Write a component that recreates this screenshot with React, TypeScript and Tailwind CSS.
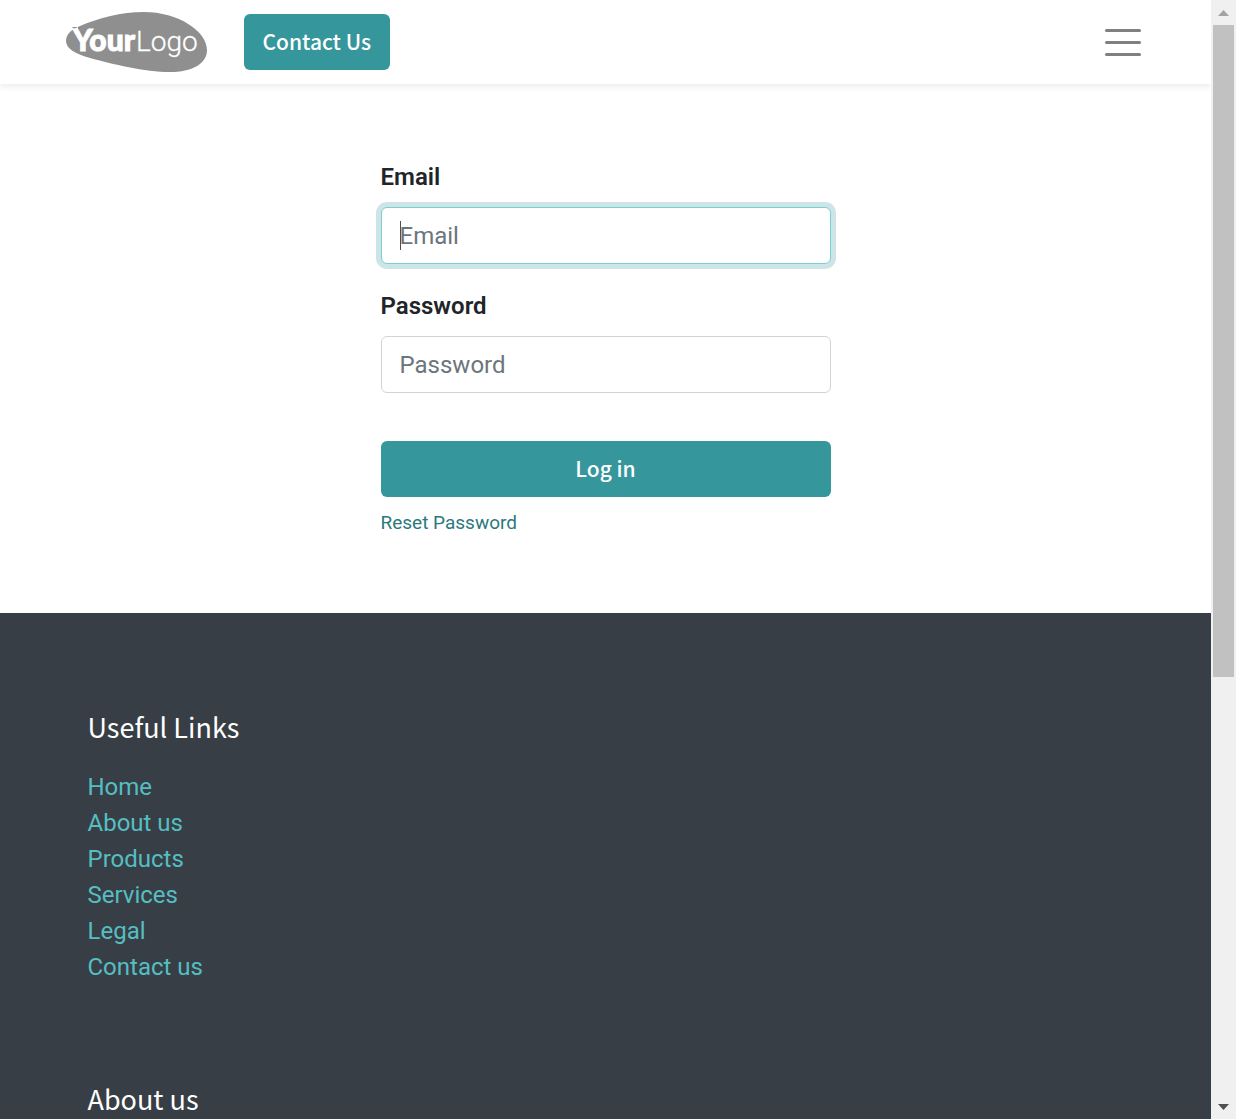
import React from "react";

const links = ["Home", "About us", "Products", "Services", "Legal", "Contact us"];

function Logo() {
  return (
    <svg width="142" height="62" viewBox="0 0 142 62" role="img" aria-label="Your Logo">
      <path
        d="M0 30C0 23 6 18 14 15C33 7 55 1 78 1C112 1 141 20 141 39C141 53 126 61 104 61C79 61 46 53 24 47C10 43 0 38 0 30Z"
        fill="#8f8f8f"
      />
      <path d="M6 16H13L9 19Z" fill="#8f8f8f" />
      <path d="M8 18L12 16L12 21Z" fill="#ffffff" />
      <text x="7" y="40" fill="#ffffff" stroke="#ffffff" strokeWidth="1" fontSize="30" className="font-['Lato'] font-black">
        Your
      </text>
      <text x="70" y="40" fill="#ffffff" stroke="#ffffff" strokeWidth="0.3" fontSize="28" className="font-['Roboto'] font-light">
        Logo
      </text>
    </svg>
  );
}

function Header() {
  return (
    <header className="relative z-10 h-[84px] bg-white shadow-[0_3px_6px_rgba(0,0,0,0.075)]">
      <nav className="mx-auto flex h-full max-w-[1080px] items-center">
        <a href="#home" className="mr-9">
          <Logo />
        </a>
        <a
          href="#contact"
          className="flex h-14 items-center rounded-md bg-[#35979c] px-[19px] pb-0.5 font-['Noto_Sans_CJK_SC',sans-serif] text-[21px] leading-9 font-medium text-white"
        >
          Contact Us
        </a>
        <button type="button" aria-label="Menu" className="mr-[5px] ml-auto flex w-9 flex-col gap-[9px]">
          <span className="h-[3px] w-full rounded-full bg-[#808080]" />
          <span className="h-[3px] w-full rounded-full bg-[#808080]" />
          <span className="h-[3px] w-full rounded-full bg-[#808080]" />
        </button>
      </nav>
    </header>
  );
}

function LoginForm() {
  return (
    <form className="mx-auto w-full max-w-[450px] pt-[75px] pb-[76px]">
      <label htmlFor="email" className="mb-3 block leading-9 font-semibold">
        Email
      </label>
      <div className="relative mb-6">
        <input
          id="email"
          type="email"
          placeholder="Email"
          className="block h-[57px] w-full rounded-md border border-[#7bcfd2] bg-white px-[18px] caret-transparent shadow-[0_0_0_5px_#cde5e6] outline-none placeholder:text-[#6c757d]"
        />
        <span className="absolute top-[14px] left-[19px] h-[29px] w-px bg-[#495057]" />
      </div>
      <label htmlFor="password" className="mb-3 block leading-9 font-semibold">
        Password
      </label>
      <input
        id="password"
        type="password"
        placeholder="Password"
        className="block h-[57px] w-full rounded-md border border-[#ced4da] bg-white px-[18px] outline-none placeholder:text-[#6c757d]"
      />
      <button
        type="submit"
        className="mt-12 block h-14 w-full rounded-md bg-[#35979c] font-['Noto_Sans_CJK_SC',sans-serif] text-[21px] font-medium text-white"
      >
        Log in
      </button>
      <a href="#reset" className="mt-3 block text-[19px] leading-7 text-[#2b797d]">
        Reset Password
      </a>
    </form>
  );
}

function Footer() {
  return (
    <footer className="flex-1 bg-[#383e45] pt-24">
      <div className="mx-auto max-w-[1080px] px-[22px]">
        <h5 className="mb-6 font-['Noto_Sans_CJK_SC',sans-serif] text-[27px] leading-9 text-white">Useful Links</h5>
        <ul className="text-[#55bec2]">
          {links.map((l) => (
            <li key={l} className="leading-9">
              <a href="#page">{l}</a>
            </li>
          ))}
        </ul>
        <h5 className="mt-24 font-['Noto_Sans_CJK_SC',sans-serif] text-[27px] leading-9 text-white">About us</h5>
      </div>
    </footer>
  );
}

function ScrollBar() {
  return (
    <div aria-hidden="true" className="flex w-[25px] shrink-0 flex-col items-center bg-[#f0f0f0]">
      <div className="flex h-[25px] shrink-0 items-center">
        <svg width="11" height="6" viewBox="0 0 11 6" className="mt-px">
          <path d="M0 6L5.5 0L11 6Z" fill="#a3a3a3" />
        </svg>
      </div>
      <div className="h-[58.3%] w-[21px] bg-[#c1c1c1]" />
      <div className="mt-auto flex h-[25px] shrink-0 items-center">
        <svg width="11" height="6" viewBox="0 0 11 6">
          <path d="M0 0L5.5 6L11 0Z" fill="#505050" />
        </svg>
      </div>
    </div>
  );
}

export default function App() {
  return (
    <div className="flex h-screen overflow-hidden bg-white font-['Roboto',sans-serif] text-[24px] text-[#212529]">
      <div className="flex min-w-0 flex-1 flex-col overflow-hidden">
        <Header />
        <main>
          <LoginForm />
        </main>
        <Footer />
      </div>
      <ScrollBar />
    </div>
  );
}
